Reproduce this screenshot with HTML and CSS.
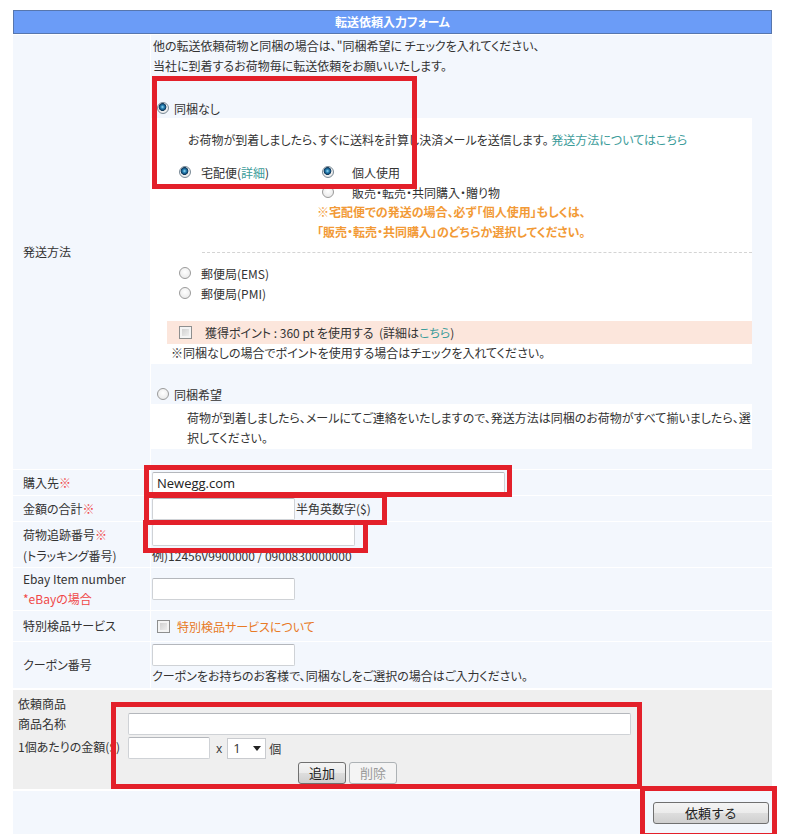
FILE: index.html
```html
<!DOCTYPE html>
<html lang="ja">
  <head>
    <meta charset="UTF-8" />
    <title>転送依頼入力フォーム</title>
    <link rel="stylesheet" href="styles.css">
  </head>
  <body>
    <div class="page">
      <div class="form">
        <div class="form-title">転送依頼入力フォーム</div>

        <div class="row row-ship">
          <div class="label"><div>発送方法</div></div>
          <div class="field ship">
            <p class="intro">他の転送依頼荷物と同梱の場合は、"同梱希望に チェックを入れてください、<br>当社に到着するお荷物毎に転送依頼をお願いいたします。</p>
            <div class="opt opt-main"><span class="radio checked"></span><span>同梱なし</span></div>
            <div class="box box-single">
              <p class="lead">お荷物が到着しましたら、すぐに送料を計算し決済メールを送信します。 <a href="#">発送方法についてはこちら</a></p>
              <div class="courier">
                <div class="courier-left">
                  <div class="opt"><span class="radio checked"></span><span>宅配便(<a href="#">詳細</a>)</span></div>
                </div>
                <div class="courier-right">
                  <div class="opt opt-use"><span class="radio checked"></span><span>個人使用</span></div>
                  <div class="opt opt-use"><span class="radio"></span><span>販売・転売・共同購入・贈り物</span></div>
                  <p class="warn">※宅配便での発送の場合、必ず「個人使用」もしくは、<br>「販売・転売・共同購入」のどちらか選択してください。</p>
                </div>
              </div>
              <div class="divider"></div>
              <div class="post">
                <div class="opt"><span class="radio"></span><span>郵便局(EMS)</span></div>
                <div class="opt"><span class="radio"></span><span>郵便局(PMI)</span></div>
              </div>
              <div class="points"><span class="check"></span><span>獲得ポイント : 360 pt を使用する &nbsp;(詳細は<a href="#">こちら</a>)</span></div>
              <p class="points-note">※同梱なしの場合でポイントを使用する場合はチェックを入れてください。</p>
            </div>
            <div class="opt opt-main opt-bundle"><span class="radio"></span><span>同梱希望</span></div>
            <div class="box box-bundle">荷物が到着しましたら、メールにてご連絡をいたしますので、発送方法は同梱のお荷物がすべて揃いましたら、選択してください。</div>
          </div>
        </div>

        <div class="row row-buy">
          <div class="label"><div>購入先<span class="req">※</span></div></div>
          <div class="field"><input type="text" class="text w-shop" value="Newegg.com"></div>
        </div>

        <div class="row row-buy">
          <div class="label"><div>金額の合計<span class="req">※</span></div></div>
          <div class="field"><input type="text" class="text w-small"><span class="hint">半角英数字($)</span></div>
        </div>

        <div class="row row-track">
          <div class="label label-two"><div>荷物追跡番号<span class="req">※</span><br>(トラッキング番号)</div></div>
          <div class="field stack"><input type="text" class="text w-track"><span class="example">例)12456V9900000 / 0900830000000</span></div>
        </div>

        <div class="row row-ebay">
          <div class="label"><div>Ebay Item number<br><span class="req">*eBayの場合</span></div></div>
          <div class="field"><input type="text" class="text w-small"></div>
        </div>

        <div class="row row-inspect">
          <div class="label"><div>特別検品サービス</div></div>
          <div class="field"><span class="check check-inspect"></span><a href="#" class="orange">特別検品サービスについて</a></div>
        </div>

        <div class="row row-coupon">
          <div class="label"><div>クーポン番号</div></div>
          <div class="field stack"><input type="text" class="text w-small"><span class="example">クーポンをお持ちのお客様で、同梱なしをご選択の場合はご入力ください。</span></div>
        </div>

        <div class="items">
          <div class="items-label">
            <div class="il-head">依頼商品</div>
            <div class="il-line">商品名称</div>
            <div class="il-line">1個あたりの金額($)</div>
          </div>
          <div class="items-field">
            <input type="text" class="text w-name">
            <div class="price-line">
              <input type="text" class="text w-price">
              <span class="times">x</span>
              <span class="select"><span class="select-val">1</span><span class="select-arrow"></span></span>
              <span class="unit">個</span>
            </div>
            <div class="item-btns">
              <button class="btn">追加</button>
              <button class="btn" disabled>削除</button>
            </div>
          </div>
        </div>

        <div class="submit-row">
          <button class="btn btn-submit">依頼する</button>
        </div>
      </div>

      <div class="mark mark-ship"></div>
      <div class="mark mark-shop"></div>
      <div class="mark mark-amount"></div>
      <div class="mark mark-track"></div>
      <div class="mark mark-items"></div>
      <div class="mark mark-submit"></div>
    </div>
  </body>
</html>
```

FILE: styles.css
```css
body {
  margin: 0;
  font-family: "Noto Sans CJK JP", "Noto Sans", sans-serif;
  font-size: 12px;
  color: #333;
  font-feature-settings: "palt";
  background: #fff;
}

p {
  margin: 0;
}

a {
  color: #3c9c9a;
  text-decoration: none;
}

.page {
  position: relative;
  padding: 10px 13px 0;
}

.form {
  width: 759px;
  display: flex;
  flex-direction: column;
  gap: 1px;
}

.form-title {
  height: 22px;
  line-height: 22px;
  border: 1px solid #5776ad;
  background: #6b9cf7;
  color: #fff;
  font-weight: bold;
  text-align: center;
}

.row {
  display: grid;
  grid-template-columns: 137px 1fr;
  column-gap: 1px;
}

.label {
  background: #f3f7fd;
  padding-left: 10px;
  line-height: 20px;
  display: flex;
  align-items: center;
}

.label-two {
  line-height: 21px;
}

.req {
  color: #f04848;
}

.field {
  background: #f3f7fd;
  padding-left: 1px;
  display: flex;
  align-items: center;
}

.field.stack {
  flex-direction: column;
  align-items: flex-start;
  justify-content: flex-start;
  padding-top: 2px;
  line-height: 20px;
}

.row-buy { height: 25px; }
.row-track { height: 45px; }
.row-ebay { height: 42px; }
.row-inspect { height: 30px; }
.row-coupon { height: 46px; }

/* shipping cell */
.ship {
  display: block;
  padding: 1px 0 20px 0;
}

.intro {
  line-height: 20px;
  padding-left: 2px;
}

.opt {
  display: flex;
  align-items: center;
  height: 20px;
}

.opt-main {
  margin-top: 22px;
  padding-left: 6px;
  gap: 5px;
}

.opt-bundle {
  margin-top: 20px;
}

.radio {
  width: 12px;
  height: 12px;
  box-sizing: border-box;
  border-radius: 50%;
  border: 1px solid #9a9a9a;
  background: radial-gradient(circle at 50% 40%, #fff 0, #e4e4e4 100%);
  flex-shrink: 0;
}

.radio.checked {
  border-color: #7a8a96;
  background: radial-gradient(circle at 45% 40%, #9fe0f6 0, #2b86b8 1.6px, #134d78 3px, #0d3354 3.6px, #f2f2f2 4.2px, #dadada 100%);
}

.check {
  width: 13px;
  height: 13px;
  box-sizing: border-box;
  border: 1px solid #8e8f8f;
  background: linear-gradient(135deg, #c9c9c9, #f6f6f6);
  box-shadow: inset 0 0 0 2px #f4f4f4;
  display: inline-block;
  flex-shrink: 0;
}

.box {
  background: #fff;
  margin-right: 20px;
}

.box-single {
  padding-bottom: 2px;
}

.lead {
  padding: 12px 0 0 37px;
  line-height: 20px;
}

.courier {
  display: flex;
  margin-top: 12px;
}

.courier-left {
  width: 138px;
  padding-left: 28px;
}

.courier-left .opt {
  gap: 10px;
}

.opt-use {
  margin-left: 5px;
  gap: 18px;
}

.warn {
  color: #f29a36;
  font-weight: bold;
  line-height: 20px;
}

.divider {
  margin: 10px 0 0 51px;
  border-top: 1px dashed #d4d4d4;
}

.post {
  margin-top: 10px;
  padding-left: 28px;
}

.post .opt {
  gap: 10px;
}

.points {
  margin: 18px 0 0 16px;
  height: 23px;
  background: #fce6dc;
  display: flex;
  align-items: center;
  padding-left: 12px;
  gap: 13px;
}

.points-note {
  padding-left: 20px;
  line-height: 18px;
}

.box-bundle {
  padding: 4px 0 1px 36px;
  line-height: 20px;
}

/* inputs */
.text {
  height: 22px;
  box-sizing: border-box;
  border: 1px solid #cfd2d6;
  border-top-color: #b4b7bc;
  border-radius: 2px;
  background: #fff;
  padding: 0 4px;
  font-family: "Open Sans", "Noto Sans", sans-serif;
  font-size: 13px;
  color: #222;
  outline: none;
}

.w-shop { width: 353px; }
.w-small { width: 143px; }
.w-track { width: 203px; }
.w-name { width: 503px; }
.w-price { width: 82px; }

.hint {
  margin-left: 1px;
}

.check-inspect {
  margin: 0 7px 0 5px;
}

.orange {
  color: #e87a26;
}

/* items */
.items {
  margin: 1px 0;
  height: 99px;
  background: #efefef;
  display: grid;
  grid-template-columns: 115px 1fr;
}

.items-label {
  padding: 5px 0 0 5px;
  overflow: hidden;
  white-space: nowrap;
}

.il-head {
  line-height: 18px;
}

.il-line {
  line-height: 22px;
  height: 23px;
}

.items-field {
  padding-top: 23px;
  display: flex;
  flex-direction: column;
}

.price-line {
  margin-top: 2px;
  display: flex;
  align-items: center;
  height: 22px;
}

.times {
  margin: 0 5px 0 6px;
  font-family: "Open Sans", sans-serif;
}

.select {
  width: 39px;
  height: 21px;
  box-sizing: border-box;
  border: 1px solid #c9cbcf;
  background: #fff;
  display: flex;
  align-items: center;
  justify-content: space-between;
  padding: 0 4px 0 5px;
  font-family: "Open Sans", sans-serif;
  font-size: 13px;
}

.select-arrow {
  width: 0;
  height: 0;
  border-left: 4px solid transparent;
  border-right: 4px solid transparent;
  border-top: 5px solid #222;
}

.unit {
  margin-left: 3px;
}

.item-btns {
  margin: 3px 0 0 170px;
  display: flex;
  gap: 3px;
}

.btn {
  height: 22px;
  box-sizing: border-box;
  padding: 0 9px;
  border: 1px solid #707070;
  border-radius: 3px;
  background: linear-gradient(#f4f4f4 0, #ebebeb 50%, #dddddd 51%, #cfcfcf 100%);
  font-family: "Noto Sans CJK JP", sans-serif;
  font-size: 13px;
  color: #222;
  line-height: 18px;
}

.btn[disabled] {
  border-color: #adb2b5;
  background: #f4f4f4;
  color: #9a9a9a;
}

.item-btns .btn {
  width: 48px;
  padding: 0;
}

.submit-row {
  height: 43px;
  background: #f3f7fd;
  display: flex;
  justify-content: flex-end;
  align-items: center;
  padding-right: 3px;
}

.btn-submit {
  width: 116px;
}

/* red annotation frames */
.mark {
  position: absolute;
  border: 5px solid #e3202a;
  box-sizing: border-box;
}

.mark-ship { left: 152px; top: 76px; width: 265px; height: 113px; }
.mark-shop { left: 144px; top: 465px; width: 368px; height: 32px; }
.mark-amount { left: 144px; top: 493px; width: 243px; height: 32px; }
.mark-track { left: 143px; top: 520px; width: 225px; height: 33px; }
.mark-items { left: 111px; top: 702px; width: 531px; height: 87px; }
.mark-submit { left: 640px; top: 786px; width: 137px; height: 52px; }
```
